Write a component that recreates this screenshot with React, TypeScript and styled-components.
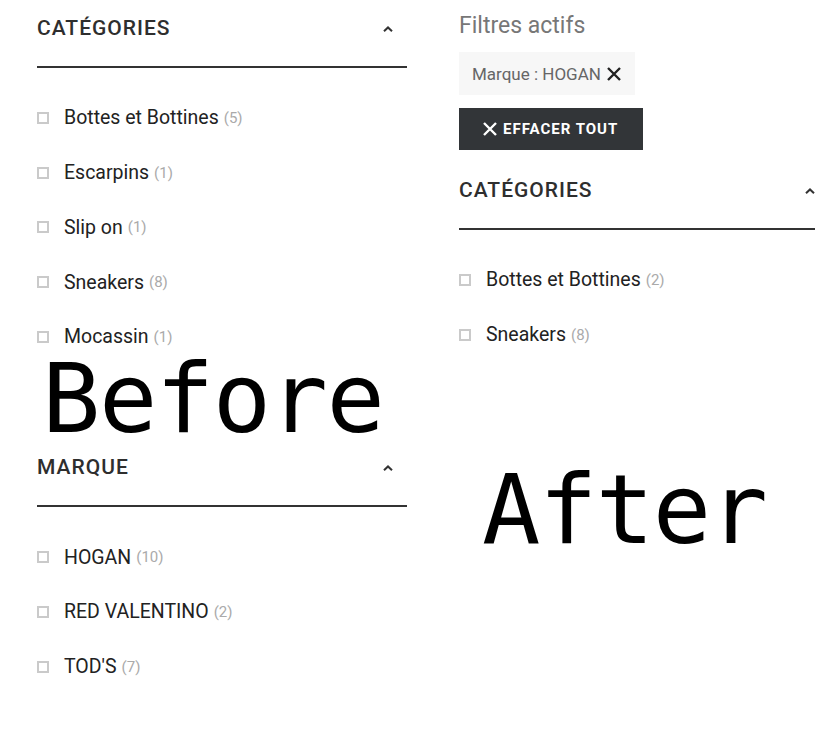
import React from "react";
import styled, { createGlobalStyle } from "styled-components";

const GlobalStyle = createGlobalStyle`
  html, body {
    margin: 0;
    padding: 0;
    background: #ffffff;
    overflow: hidden;
  }
  body {
    font-family: Roboto, "Liberation Sans", Arial, sans-serif;
    color: #333333;
  }
`;

const Page = styled.div`
  display: grid;
  grid-template-columns: 370px 370px;
  column-gap: 52px;
  padding-left: 37px;
  width: max-content;
`;

const Column = styled.div`
  display: flex;
  flex-direction: column;
  align-items: stretch;
`;

const Section = styled.section`
  display: flex;
  flex-direction: column;
`;

const Header = styled.div`
  display: flex;
  align-items: center;
  justify-content: space-between;
  padding: 16px 14px 0 0;
`;

const Title = styled.h2`
  margin: 0;
  font-size: 21px;
  line-height: 24px;
  font-weight: 500;
  letter-spacing: 1px;
  text-transform: uppercase;
  color: #2e2e2e;
`;

const Chevron = styled.svg`
  width: 10px;
  height: 6px;
  margin-top: 2px;
  display: block;
`;

const Rule = styled.div`
  margin-top: 26px;
  height: 2px;
  background: #333333;
`;

const List = styled.ul`
  list-style: none;
  margin: 0;
  padding: 22.5px 0 0 0;
`;

const Item = styled.li`
  display: flex;
  align-items: center;
  height: 54.75px;
`;

const Box = styled.span`
  box-sizing: border-box;
  width: 12px;
  height: 12px;
  border: 2px solid #cacaca;
  flex: none;
  margin-right: 15px;
`;

const Label = styled.span`
  font-size: 19.5px;
  color: #222222;
`;

const Count = styled.span`
  font-size: 15px;
  color: #aaaaaa;
  margin-left: 5px;
`;

const BigLabel = styled.div<{ $inset: number; $top: number; $bottom: number }>`
  font-family: "DejaVu Sans Mono", "Liberation Mono", monospace;
  font-size: 97px;
  line-height: 72px;
  letter-spacing: -1.5px;
  color: #000000;
  padding-left: ${(p) => p.$inset}px;
  margin-top: ${(p) => p.$top}px;
  margin-bottom: ${(p) => p.$bottom}px;
`;

const ActiveTitle = styled.h3`
  margin: 12px 0 12px 0;
  font-size: 23px;
  line-height: 28px;
  font-weight: 400;
  color: #777777;
`;

const ActiveGroup = styled.div`
  display: flex;
  flex-direction: column;
  align-items: flex-start;
  gap: 13px;
  margin-bottom: 12px;
`;

const Chip = styled.div`
  display: inline-flex;
  align-items: center;
  gap: 6px;
  height: 43px;
  padding: 0 14px 0 13px;
  background: #f7f7f7;
  font-size: 17px;
  color: #666666;
`;

const ClearButton = styled.button`
  display: inline-flex;
  align-items: center;
  gap: 6px;
  height: 42px;
  padding: 0 25px 0 24px;
  border: none;
  background: #323538;
  color: #ffffff;
  font-family: Roboto, "Liberation Sans", Arial, sans-serif;
  font-size: 15px;
  font-weight: 700;
  letter-spacing: 1px;
  text-transform: uppercase;
  cursor: pointer;
`;

const Cross = ({ color }: { color: string }) => (
  <svg width="14" height="14" viewBox="0 0 14 14" style={{ display: "block" }}>
    <path d="M1 1 L13 13 M13 1 L1 13" stroke={color} strokeWidth="2.4" strokeLinecap="butt" />
  </svg>
);

type Opt = { name: string; count: number };

const FilterSection = ({ title, options }: { title: string; options: Opt[] }) => (
  <Section>
    <Header>
      <Title>{title}</Title>
      <Chevron viewBox="0 0 10 6">
        <polyline points="1,5.2 5,1.4 9,5.2" fill="none" stroke="#333" strokeWidth="2" />
      </Chevron>
    </Header>
    <Rule />
    <List>
      {options.map((o) => (
        <Item key={o.name}>
          <Box />
          <Label>{o.name}</Label>
          <Count>({o.count})</Count>
        </Item>
      ))}
    </List>
  </Section>
);

export default function App() {
  return (
    <>
      <GlobalStyle />
      <Page>
        <Column>
          <FilterSection
            title="Catégories"
            options={[
              { name: "Bottes et Bottines", count: 5 },
              { name: "Escarpins", count: 1 },
              { name: "Slip on", count: 1 },
              { name: "Sneakers", count: 8 },
              { name: "Mocassin", count: 1 },
            ]}
          />
          <BigLabel $inset={5} $top={-1} $bottom={4}>
            Before
          </BigLabel>
          <FilterSection
            title="Marque"
            options={[
              { name: "HOGAN", count: 10 },
              { name: "RED VALENTINO", count: 2 },
              { name: "TOD'S", count: 7 },
            ]}
          />
        </Column>
        <Column>
          <ActiveTitle>Filtres actifs</ActiveTitle>
          <ActiveGroup>
            <Chip>
              Marque : HOGAN
              <Cross color="#222" />
            </Chip>
            <ClearButton>
              <Cross color="#fff" />
              Effacer tout
            </ClearButton>
          </ActiveGroup>
          <FilterSection
            title="Catégories"
            options={[
              { name: "Bottes et Bottines", count: 2 },
              { name: "Sneakers", count: 8 },
            ]}
          />
          <BigLabel $inset={23} $top={112} $bottom={0}>
            After
          </BigLabel>
        </Column>
      </Page>
    </>
  );
}
